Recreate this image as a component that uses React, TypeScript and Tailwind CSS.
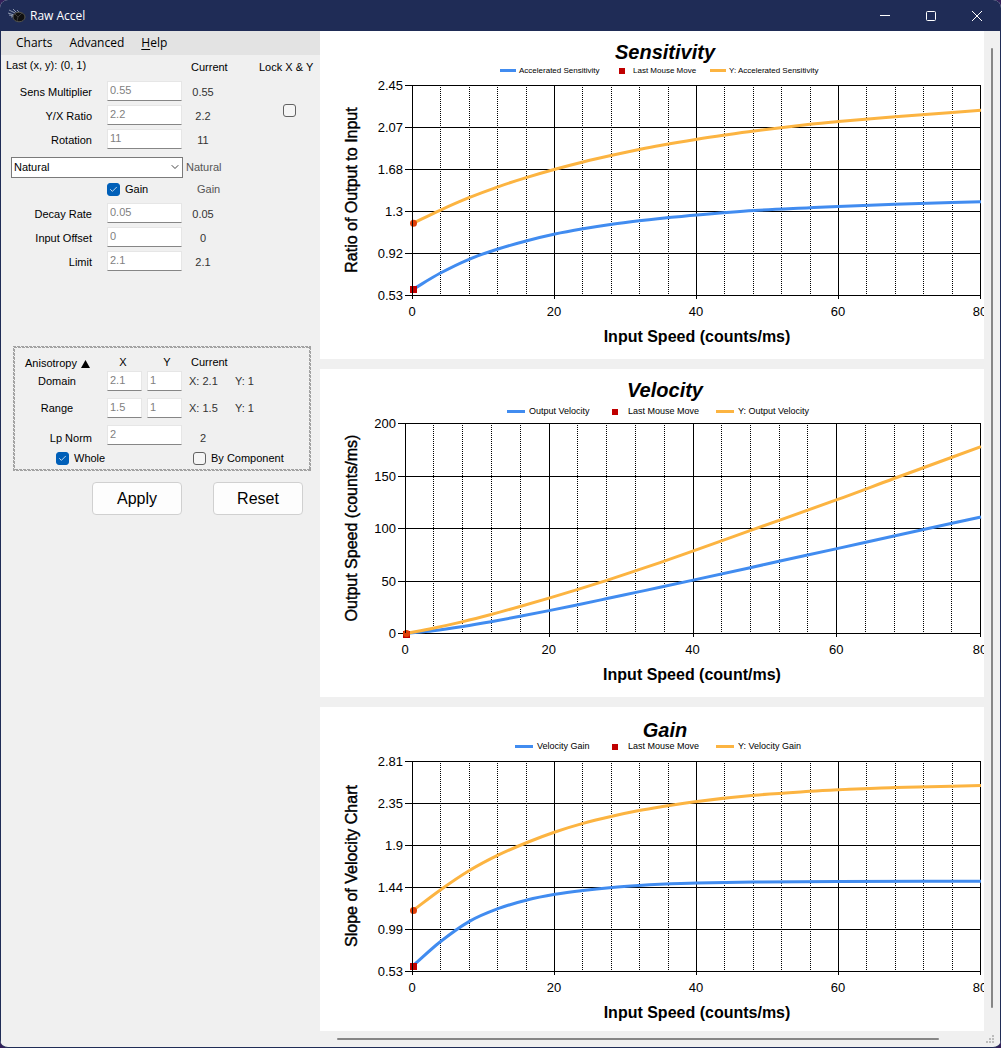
import React from "react";
import { Check, ChevronDown } from "lucide-react";

type Point = [number, number];

type ChartSpec = {
  title: string;
  titleY: number;
  xLabel: string;
  xLabelCenter: number;
  yLabel: string;
  yLabelCenter: number;
  height: number;
  left: number;
  top: number;
  minor: number[];
  yTicks: string[];
  legendSize: number;
  legend: { text: string; markX: number; textX: number }[];
  legendY: number;
  markLength: number;
  blue: Point[];
  gold: Point[];
};

const BLUE = "#418cf0";
const GOLD = "#fcb441";
const RIGHT = 660;
const PLOT_HEIGHT = 210;

const NARROW_GRID = [120, 149, 177, 206, 262, 291, 319, 348, 404, 433, 461, 490, 546, 575, 603, 632];
const WIDE_GRID = [113, 142, 171, 200, 257, 286, 315, 344, 401, 430, 459, 487, 545, 574, 603, 631];

const charts: ChartSpec[] = [
  {
    title: "Sensitivity",
    titleY: 28,
    xLabel: "Input Speed (counts/ms)",
    xLabelCenter: 377,
    yLabel: "Ratio of Output to Input",
    yLabelCenter: 159,
    height: 328,
    left: 92,
    top: 54,
    minor: NARROW_GRID,
    yTicks: ["2.45", "2.07", "1.68", "1.3", "0.92", "0.53"],
    legendSize: 8,
    legend: [
      { text: "Accelerated Sensitivity", markX: 180, textX: 199 },
      { text: "Last Mouse Move", markX: 299, textX: 313 },
      { text: "Y: Accelerated Sensitivity", markX: 390, textX: 409 },
    ],
    legendY: 42,
    markLength: 16,
    blue: [[93, 258.3], [120, 242.3], [149, 228.3], [178, 218], [207, 209.7], [235, 203], [263, 197.8], [292, 193.2], [319, 189.7], [340, 187.4], [377, 183.9], [434, 179.5], [490, 176.7], [518, 175.4], [575, 173.3], [661, 170.7]],
    gold: [[93, 192.3], [120, 179.3], [149, 166.7], [178, 155.8], [207, 146.4], [235, 138.3], [263, 131], [292, 124.3], [319, 118.5], [340, 114.4], [377, 108.2], [405, 104], [434, 100], [490, 93.3], [518, 90.6], [575, 85.7], [661, 79.3]],
  },
  {
    title: "Velocity",
    titleY: 28,
    xLabel: "Input Speed (count/ms)",
    xLabelCenter: 372,
    yLabel: "Output Speed (counts/ms)",
    yLabelCenter: 159,
    height: 328,
    left: 85,
    top: 54,
    minor: WIDE_GRID,
    yTicks: ["200", "150", "100", "50", "0"],
    legendSize: 9,
    legend: [
      { text: "Output Velocity", markX: 187, textX: 209 },
      { text: "Last Mouse Move", markX: 292, textX: 308 },
      { text: "Y: Output Velocity", markX: 396, textX: 418 },
    ],
    legendY: 45,
    markLength: 18,
    blue: [[86, 264.5], [113, 261.7], [143, 257.4], [171, 252.7], [200, 247.3], [229, 241.6], [258, 235.7], [286, 229.8], [316, 223.4], [340, 218.3], [372, 211.4], [430, 198.7], [459, 192.3], [517, 179.6], [574, 167], [661, 148]],
    gold: [[86, 264.5], [113, 259.3], [143, 252.6], [171, 245.5], [200, 237.5], [229, 229.1], [258, 220.4], [286, 211.6], [316, 201.7], [340, 193.6], [372, 182.4], [430, 161.6], [517, 130.7], [574, 109.5], [661, 77.6]],
  },
  {
    title: "Gain",
    titleY: 30,
    xLabel: "Input Speed (counts/ms)",
    xLabelCenter: 377,
    yLabel: "Slope of Velocity Chart",
    yLabelCenter: 159,
    height: 324,
    left: 92,
    top: 54,
    minor: NARROW_GRID,
    yTicks: ["2.81", "2.35", "1.9", "1.44", "0.99", "0.53"],
    legendSize: 9,
    legend: [
      { text: "Velocity Gain", markX: 195, textX: 217 },
      { text: "Last Mouse Move", markX: 292, textX: 308 },
      { text: "Y: Velocity Gain", markX: 396, textX: 418 },
    ],
    legendY: 42,
    markLength: 18,
    blue: [[93, 258.7], [120, 235], [149, 214.6], [178, 201.7], [207, 193], [235, 187.3], [263, 183.4], [292, 180.4], [319, 178.4], [340, 177.3], [377, 176], [434, 175], [518, 174.4], [661, 174.2]],
    gold: [[93, 203.5], [120, 183.2], [149, 163.8], [178, 148.2], [207, 135.5], [235, 125], [263, 116.4], [292, 109.2], [319, 103.5], [340, 99.9], [377, 94.4], [434, 88.3], [490, 84.3], [518, 82.8], [575, 80.4], [661, 78.6]],
  },
];

function smoothPath(points: Point[]): string {
  const n = points.length;
  const slopes = points.map((_, i) => {
    const a = points[Math.max(0, i - 1)];
    const b = points[Math.min(n - 1, i + 1)];
    return (b[1] - a[1]) / (b[0] - a[0]);
  });
  let d = `M${points[0][0]} ${points[0][1]}`;
  for (let i = 0; i < n - 1; i++) {
    const [x0, y0] = points[i];
    const [x1, y1] = points[i + 1];
    const h = (x1 - x0) / 3;
    d += ` C${x0 + h} ${y0 + slopes[i] * h} ${x1 - h} ${y1 - slopes[i + 1] * h} ${x1} ${y1}`;
  }
  return d;
}

function Chart({ spec }: { spec: ChartSpec }) {
  const { left, top, yTicks, legend, legendY, legendSize } = spec;
  const bottom = top + PLOT_HEIGHT;
  const width = RIGHT - left;
  const snap = (v: number) => Math.round(v) + 0.5;
  return (
    <svg
      role="img"
      aria-label={`${spec.title} chart`}
      viewBox={`0 0 664 ${spec.height}`}
      className="block h-auto w-full bg-white font-['Liberation_Sans',Arial,sans-serif]"
    >
      <text x={345} y={spec.titleY} textAnchor="middle" className="text-[20px] font-bold italic">
        {spec.title}
      </text>
      <rect x={legend[0].markX} y={legendY - 4} width={spec.markLength} height={3} fill={BLUE} />
      <rect x={legend[1].markX} y={legendY - 5} width={6} height={6} fill="#c00000" />
      <rect x={legend[2].markX} y={legendY - 4} width={spec.markLength} height={3} fill={GOLD} />
      {legend.map((l) => (
        <text key={l.text} x={l.textX} y={legendY} fontSize={legendSize}>
          {l.text}
        </text>
      ))}

      {spec.minor.map((x) => (
        <line key={x} x1={x + 0.5} x2={x + 0.5} y1={top} y2={bottom} stroke="#000" strokeDasharray="1 1" />
      ))}
      {[0, 1, 2, 3, 4].map((i) => {
        const x = snap(left + (width * i) / 4);
        return (
          <g key={i}>
            <line x1={x} x2={x} y1={top} y2={bottom + 4} stroke="#000" />
            <text x={left + (width * i) / 4} y={bottom + 21} textAnchor="middle" className="text-[13px]">
              {i * 20}
            </text>
          </g>
        );
      })}
      {yTicks.map((t, i) => {
        const y = snap(top + (PLOT_HEIGHT * i) / (yTicks.length - 1));
        return (
          <g key={t}>
            <line x1={left - 7} x2={RIGHT + 1} y1={y} y2={y} stroke="#000" />
            <text x={left - 9} y={y + 4} textAnchor="end" className="text-[13px]">
              {t}
            </text>
          </g>
        );
      })}

      <path d={smoothPath(spec.blue)} fill="none" stroke={BLUE} strokeWidth={3} />
      <path d={smoothPath(spec.gold)} fill="none" stroke={GOLD} strokeWidth={3} />
      <rect x={spec.blue[0][0] - 3} y={Math.round(spec.blue[0][1]) - 3} width={7} height={7} fill="#c00000" />
      <circle cx={spec.gold[0][0] + 0.5} cy={spec.gold[0][1]} r={3.5} fill="#e0400a" />
      <line x1={left + 0.5} x2={left + 0.5} y1={top} y2={bottom} stroke="#000" />

      <text x={spec.xLabelCenter} y={bottom + 47} textAnchor="middle" className="text-[16px] font-bold">
        {spec.xLabel}
      </text>
      <text
        transform={`translate(37 ${spec.yLabelCenter}) rotate(-90)`}
        textAnchor="middle"
        className="text-[16px]"
        stroke="#000"
        strokeWidth={0.4}
      >
        {spec.yLabel}
      </text>
    </svg>
  );
}

function Field({ id, value, label }: { id: string; value: string; label?: string }) {
  return (
    <input
      id={id}
      aria-label={label}
      defaultValue={value}
      className="block h-5 w-full min-w-0 border border-[#e6e6e6] border-b-[#868686] bg-white px-0.5 pb-0.5 text-[11px] leading-none text-[#7f7f7f] outline-none"
    />
  );
}

function CheckBox({ label, hidden, checked }: { label: string; hidden?: boolean; checked?: boolean }) {
  return (
    <label className="flex items-center gap-[5px]">
      <span className="relative block size-[13px]">
        <input
          type="checkbox"
          aria-label={hidden ? label : undefined}
          defaultChecked={checked}
          className="peer block size-[13px] appearance-none rounded-[3px] border border-[#626262] bg-[#f5f5f5] checked:border-[#005fb8] checked:bg-[#005fb8]"
        />
        <Check
          className="pointer-events-none absolute top-0.5 left-0.5 hidden size-[9px] text-white peer-checked:block"
          strokeWidth={2}
        />
      </span>
      {!hidden && <span>{label}</span>}
    </label>
  );
}

function Row({ id, label, value }: { id: string; label: string; value: string }) {
  return (
    <div className="grid h-6 grid-cols-[91px_90px_42px] items-start">
      <label htmlFor={id} className="pt-[5px] text-right">
        {label}
      </label>
      <div className="pl-[15px]">
        <Field id={id} value={value} />
      </div>
      <span className="pt-[5px] text-center text-[#333]">{value}</span>
    </div>
  );
}

function AxisRow({ label, x, y }: { label: string; x: string; y: string }) {
  return (
    <div className="grid h-[27px] grid-cols-[84px_35px_35px_42px_42px] items-start">
      <span className="flex justify-center pt-1">{label}</span>
      <div className="ml-2">
        <div className="w-[35px]">
          <Field id={`${label}-x`} label={`${label} X`} value={x} />
        </div>
      </div>
      <div className="ml-[13px]">
        <div className="w-[35px]">
          <Field id={`${label}-y`} label={`${label} Y`} value={y} />
        </div>
      </div>
      <span className="ml-5 whitespace-nowrap pt-1 text-[#333]">X: {x}</span>
      <span className="ml-6 whitespace-nowrap pt-1 text-[#333]">Y: {y}</span>
    </div>
  );
}

function TitleBar() {
  return (
    <header className="flex h-[31px] shrink-0 items-center bg-[#1f2c56] pr-px pl-2 text-white">
      <svg viewBox="0 0 18 14" className="h-3.5 w-[18px]" aria-hidden="true">
        <path d="M1 1l6 3M0 4l6 2M3 8l4-1M5 0l4 4M9 1l2 2M1 6l5 1" stroke="#8b95ab" strokeWidth="1" fill="none" />
        <ellipse cx="11" cy="8" rx="6" ry="4.8" fill="#101010" stroke="#55554f" strokeWidth="1" />
        <path d="M7 5l3 3-1 4M10 8l4-4" stroke="#3c3c3c" strokeWidth="1" fill="none" />
      </svg>
      <h1 className="ml-1 flex-1 font-['Open_Sans','Noto_Sans',sans-serif] text-[12px]">Raw Accel</h1>
      <button aria-label="Minimize" className="flex h-full w-[46px] items-center justify-center">
        <svg viewBox="0 0 10 10" className="size-2.5" stroke="currentColor" fill="none">
          <path d="M0 4.5h10" />
        </svg>
      </button>
      <button aria-label="Maximize" className="flex h-full w-[46px] items-center justify-center">
        <svg viewBox="0 0 10 10" className="size-2.5" stroke="currentColor" fill="none">
          <rect x="0.5" y="0.5" width="9" height="9" rx="1" />
        </svg>
      </button>
      <button aria-label="Close" className="flex h-full w-[46px] items-center justify-center">
        <svg viewBox="0 0 10 10" className="size-2.5" stroke="currentColor" fill="none">
          <path d="M0 0l10 10M10 0L0 10" />
        </svg>
      </button>
    </header>
  );
}

function Settings() {
  return (
    <aside className="w-[319px] shrink-0 text-[11px] leading-[13px] text-black">
      <nav className="flex h-6 items-center gap-[17px] bg-[#e3e3e3] pb-0.5 pl-[15px] font-['Open_Sans','Noto_Sans',sans-serif] text-[12px]">
        <button>Charts</button>
        <button>Advanced</button>
        <button>
          <span className="underline underline-offset-2">H</span>elp
        </button>
      </nav>

      <div className="grid h-[26px] grid-cols-[185px_48px_1fr] pt-1 pl-[5px]">
        <span>Last (x, y): (0, 1)</span>
        <span className="pt-0.5">Current</span>
        <span className="pt-0.5 pl-5">Lock X &amp; Y</span>
      </div>

      <div className="flex">
        <div>
          <Row id="sens" label="Sens Multiplier" value="0.55" />
          <Row id="ratio" label="Y/X Ratio" value="2.2" />
          <Row id="rotation" label="Rotation" value="11" />
        </div>
        <div className="pt-[23px] pl-[59px]">
          <CheckBox label="Lock X & Y" hidden />
        </div>
      </div>

      <div className="mt-1 flex items-center gap-[3px] pl-2.5">
        <div className="relative w-[172px]">
          <select
            aria-label="Acceleration style"
            className="block h-[21px] w-full appearance-none border border-[#7a7a7a] bg-white px-0.5 text-[11px] outline-none"
          >
            <option>Natural</option>
          </select>
          <ChevronDown className="pointer-events-none absolute top-1 right-0.5 size-3 text-[#444]" strokeWidth={2} />
        </div>
        <span className="text-[#555]">Natural</span>
      </div>

      <div className="mt-1 mb-[7px] flex h-3.5 items-center pl-[106px]">
        <div className="w-[90px]">
          <CheckBox label="Gain" checked />
        </div>
        <span className="text-[#555]">Gain</span>
      </div>

      <Row id="decay" label="Decay Rate" value="0.05" />
      <Row id="offset" label="Input Offset" value="0" />
      <Row id="limit" label="Limit" value="2.1" />

      <section className="relative mt-[71px] mr-[9px] ml-3 h-[125px] p-0.5">
        <svg className="pointer-events-none absolute inset-0 size-full" aria-hidden="true">
          <defs>
            <pattern id="hatch" width="4" height="4" patternUnits="userSpaceOnUse">
              <path d="M0 0h3v1H0zM1 1h3v1H1zM2 2h2v1H2zM0 2h1v1H0zM3 3h1v1H3zM0 3h2v1H0z" fill="#a2a2a2" />
            </pattern>
          </defs>
          <rect width="100%" height="2" fill="url(#hatch)" />
          <rect width="2" height="100%" fill="url(#hatch)" />
          <svg x="100%" width="2" height="100%" overflow="visible">
            <rect x="-2" width="2" height="100%" fill="url(#hatch)" />
          </svg>
          <svg y="100%" width="100%" height="2" overflow="visible">
            <rect y="-2" width="100%" height="2" fill="url(#hatch)" />
          </svg>
        </svg>
        <div className="flex h-[23px] pt-2">
          <span className="flex w-[86px] items-center gap-1 pl-2.5">
            Anisotropy
            <svg viewBox="0 0 9 8" className="h-2 w-[9px]" aria-hidden="true">
              <path d="M4.500 0L9 8H0z" />
            </svg>
          </span>
          <span className="w-11 text-center">X</span>
          <span className="w-11 text-center">Y</span>
          <span className="pl-0.5">Current</span>
        </div>
        <AxisRow label="Domain" x="2.1" y="1" />
        <AxisRow label="Range" x="1.5" y="1" />
        <div className="grid h-[26px] grid-cols-[77px_90px_42px]">
          <label htmlFor="norm" className="pt-[7px] text-right">
            Lp Norm
          </label>
          <div className="pl-[15px]">
            <Field id="norm" value="2" />
          </div>
          <span className="pt-[7px] text-center text-[#333]">2</span>
        </div>
        <div className="flex h-3.5 items-center pl-[41px]">
          <div className="w-[137px]">
            <CheckBox label="Whole" checked />
          </div>
          <CheckBox label="By Component" />
        </div>
      </section>

      <div className="mt-[11px] flex gap-[31px] pl-[91px] text-[16px]">
        <button className="h-[33px] w-[90px] rounded-[4px] border border-[#d0d0d0] bg-[#fdfdfd]">Apply</button>
        <button className="h-[33px] w-[90px] rounded-[4px] border border-[#d0d0d0] bg-[#fdfdfd]">Reset</button>
      </div>
    </aside>
  );
}

export default function App() {
  return (
    <div className="min-h-screen bg-[#33205a] font-['Liberation_Sans',Arial,sans-serif]">
      <div className="flex min-h-screen flex-col overflow-hidden rounded-lg border-b border-[#1f2c56] bg-[#f0f0f0]">
        <TitleBar />
        <div className="flex flex-1 border-x border-[#1f2c56]">
          <Settings />
          <main className="min-w-0 flex-1">
            <div className="flex">
              <div className="flex min-w-0 flex-1 flex-col gap-2.5">
                {charts.map((spec) => (
                  <Chart key={spec.title} spec={spec} />
                ))}
              </div>
              <div className="flex w-4 shrink-0 justify-center pt-[17px] pb-[23px]">
                <div className="w-0.5 rounded-full bg-[#868686]" />
              </div>
            </div>
            <div className="flex h-4 items-center justify-between pr-0.5 pl-[17px]">
              <div className="mr-[43px] h-0.5 flex-1 rounded-full bg-[#868686]" />
              <svg viewBox="0 0 16 14" className="h-3.5 w-4" fill="#bdbdbd" aria-hidden="true">
                <path d="M10 3h2v2h-2zM7 6h2v2H7zM10 6h2v2h-2zM4 9h2v2H4zM7 9h2v2H7zM10 9h2v2h-2z" />
              </svg>
            </div>
          </main>
        </div>
      </div>
    </div>
  );
}
